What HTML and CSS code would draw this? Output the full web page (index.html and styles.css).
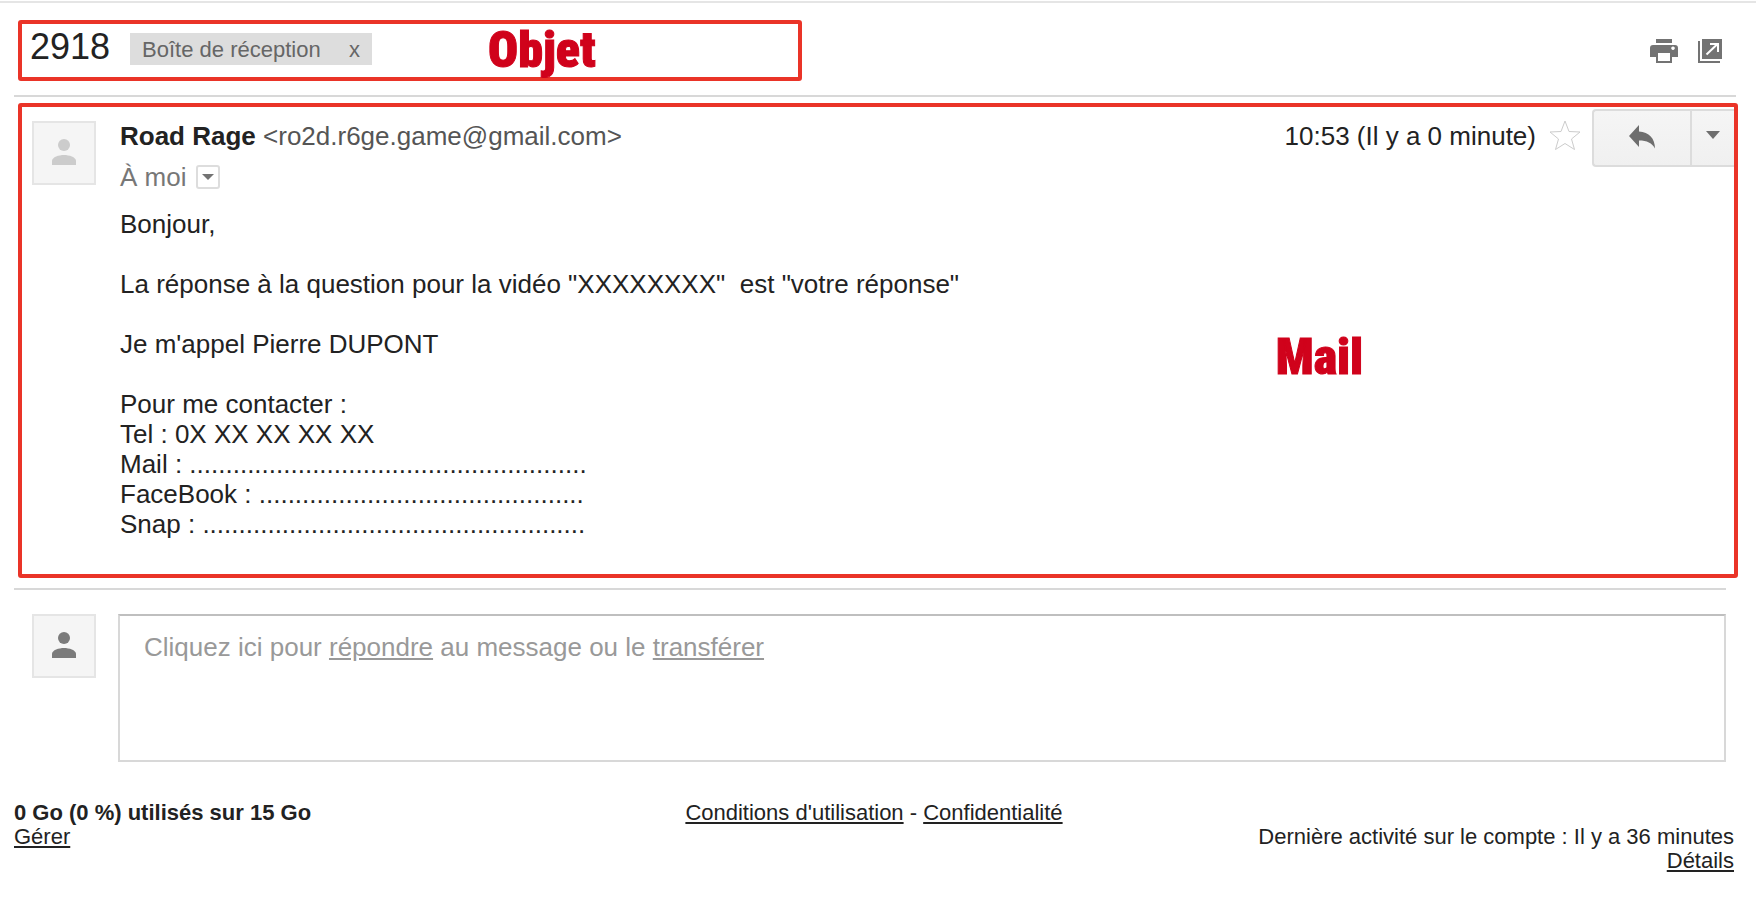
FILE: index.html
```html
<!DOCTYPE html>
<html lang="fr">

<head>
    <meta charset="UTF-8">
    <meta name="viewport" content="width=device-width, initial-scale=1.0">
    <title>2918 - Boîte de réception</title>
    <link rel="stylesheet" href="styles.css">
</head>

<body>
    <main class="page">
        <header class="header">
            <div class="frame subject">
                <h1>2918</h1>
                <div class="label">
                    <span>Boîte de réception</span>
                    <button type="button" aria-label="Retirer le libellé">x</button>
                </div>
                <strong class="note">Objet</strong>
            </div>
            <div class="tools">
                <button type="button" class="tool" aria-label="Imprimer">
                    <svg width="28" height="24" viewBox="0 0 28 24">
                        <path fill="#737373" fill-rule="evenodd" d="M6 0h16v4H6zM3 6h22a3 3 0 0 1 3 3v9h-6v6H6v-6H0V9a3 3 0 0 1 3-3zM8 14v8h12v-8zM23 7.400a1.800 1.800 0 1 0 .01 0z" />
                    </svg>
                </button>
                <button type="button" class="tool" aria-label="Nouvelle fenêtre">
                    <svg width="24" height="24" viewBox="0 0 24 24">
                        <path fill="#737373" d="M4 0h20v20H4zM0 2h2v20h20v2H0z" />
                        <path fill="none" stroke="#fff" stroke-width="2" d="M12 5h8v8M8.500 15.500L19 5.500" />
                    </svg>
                </button>
            </div>
        </header>

        <article class="frame mail">
            <div class="avatar">
                <svg width="24" height="26" viewBox="0 0 24 26">
                    <circle cx="12" cy="6" r="6" />
                    <path d="M0 26v-4c0-4 7-6 12-6s12 2 12 6v4z" />
                </svg>
            </div>
            <div class="content">
                <p class="from"><b>Road Rage</b> <span>&lt;ro2d.r6ge.game@gmail.com&gt;</span></p>
                <p class="to">À moi
                    <button type="button" class="details" aria-label="Afficher les détails">
                        <svg width="12" height="6" viewBox="0 0 12 6"><path fill="#737373" d="M0 0h12L6 6z" /></svg>
                    </button>
                </p>
                <div class="text">
                    <p>Bonjour,</p>
                    <p>La réponse à la question pour la vidéo "XXXXXXXX"&nbsp; est "votre réponse"</p>
                    <p>Je m'appel Pierre DUPONT</p>
                    <p>
                        Pour me contacter :<br>
                        Tel : 0X XX XX XX XX<br>
                        Mail : .......................................................<br>
                        FaceBook : .............................................<br>
                        Snap : .....................................................
                    </p>
                </div>
            </div>
            <div class="actions">
                <time>10:53 (Il y a 0 minute)</time>
                <button type="button" class="star" aria-label="Suivi">
                    <svg width="32" height="32" viewBox="0 0 32 32">
                        <path fill="#fff" stroke="#ccc" d="M16 2l4 10.500 11 .5-8.500 7 3 10.500L16 24.500 6.500 30.500l3-10.500L1 13l11-.5z" />
                    </svg>
                </button>
                <div class="split">
                    <button type="button" class="reply-btn" aria-label="Répondre">
                        <svg width="26" height="24" viewBox="0 0 26 24">
                            <path fill="#6e6e6e" d="M10 0v6.500c10 .5 16 7 16 17C23 18 18 15.500 10 15.500V22L0 11z" />
                        </svg>
                    </button>
                    <button type="button" class="more-btn" aria-label="Plus">
                        <svg width="14" height="8" viewBox="0 0 14 8"><path fill="#6e6e6e" d="M0 0h14L7 8z" /></svg>
                    </button>
                </div>
            </div>
            <strong class="note note-mail">Mail</strong>
        </article>

        <section class="answer">
            <div class="avatar me">
                <svg width="24" height="26" viewBox="0 0 24 26">
                    <circle cx="12" cy="6" r="6" />
                    <path d="M0 26v-4c0-4 7-6 12-6s12 2 12 6v4z" />
                </svg>
            </div>
            <div class="answer-box">
                Cliquez ici pour <a href="#">répondre</a> au message ou le <a href="#">transférer</a>
            </div>
        </section>

        <footer class="footer">
            <div>
                <b>0 Go (0 %) utilisés sur 15 Go</b><br>
                <a href="#">Gérer</a>
            </div>
            <div><a href="#">Conditions d'utilisation</a> - <a href="#">Confidentialité</a></div>
            <div class="activity">
                Dernière activité sur le compte : Il y a 36 minutes<br>
                <a href="#">Détails</a>
            </div>
        </footer>
    </main>
</body>

</html>
```
FILE: styles.css
```css
*{
    margin:0;
    padding:0;
    box-sizing:border-box;
}
body{
    padding-top:1px;
    background-color:#fff;
    color:#222;
    font-family:Arial, "Liberation Sans", sans-serif;
    font-size:26px;
    line-height:30px;
}
button{
    border:none;
    background:none;
    font:inherit;
    color:inherit;
    cursor:pointer;
}
svg{
    display:block;
}
a{
    color:inherit;
}
.page{
    border-top:2px solid #e5e5e5;
    padding:17px 18px 20px 14px;
}

/* red frames and notes */
.frame{
    border:4px solid #ea3428;
    border-radius:3px;
}
.note{
    color:#d0021b;
    font-family:Impact, "Roboto Condensed", Roboto, sans-serif;
    font-weight:900;
    font-size:50px;
    line-height:52px;
    -webkit-text-stroke:1px #d0021b;
}

/* subject */
.header{
    display:flex;
    justify-content:space-between;
    margin-right:2px;
    padding:0 14px 14px 4px;
    border-bottom:2px solid #d8d8d8;
}
.subject{
    display:flex;
    align-items:flex-start;
    width:46%;
    height:61px;
    padding-left:8px;
}
.subject h1{
    padding-top:3px;
    font-size:36px;
    line-height:40px;
    font-weight:normal;
}
.subject .note{
    margin-left:116px;
}
.label{
    display:flex;
    justify-content:space-between;
    width:242px;
    height:32px;
    margin:9px 0 0 20px;
    padding:0 12px;
    background-color:#ddd;
    color:#666;
    font-size:22px;
    line-height:34px;
}
.tools{
    display:flex;
    align-items:center;
    gap:20px;
}

/* message */
.mail{
    position:relative;
    display:flex;
    margin:6px 0 10px 4px;
    padding:2px 0 35px 10px;
}
.avatar{
    display:flex;
    justify-content:center;
    flex:none;
    width:64px;
    height:64px;
    padding-top:16px;
    border:2px solid #e5e5e5;
    background-color:#f5f5f5;
    fill:#ccc;
}
.mail .avatar{
    margin-top:12px;
}
.me{
    fill:#7b7b7b;
}
.content{
    flex:1;
    margin-left:24px;
    padding-top:12px;
}
.from span{
    color:#555;
}
.to{
    display:flex;
    align-items:center;
    gap:10px;
    margin:11px 0 17px;
    color:#777;
}
.details{
    display:flex;
    align-items:center;
    justify-content:center;
    width:24px;
    height:24px;
    border:2px solid #ddd;
    border-radius:3px;
}
.text p{
    margin-bottom:30px;
}
.text p:last-child{
    margin-bottom:0;
}
.actions{
    display:flex;
    align-items:flex-start;
}
.actions time{
    padding-top:12px;
}
.star{
    margin:10px 11px 0 13px;
}
.split{
    display:flex;
    height:58px;
    border:2px solid #dcdcdc;
    border-right:none;
    border-radius:4px 0 0 4px;
    background-image:linear-gradient(#f5f5f5, #f0f0f0);
}
.split button{
    display:flex;
    justify-content:center;
}
.reply-btn{
    width:98px;
    padding-top:14px;
    border-right:2px solid #dcdcdc;
}
.more-btn{
    width:42px;
    padding-top:20px;
}
.note-mail{
    position:absolute;
    left:73%;
    top:48%;
    padding-left:4px;
}

/* answer */
.answer{
    display:flex;
    gap:22px;
    margin-right:12px;
    padding:24px 0 0 18px;
    border-top:2px solid #d8d8d8;
}
.answer-box{
    flex:1;
    min-height:148px;
    padding:16px 24px;
    border:2px solid #d8d8d8;
    border-top-color:#bfbfbf;
    color:#999;
}

/* footer */
.footer{
    display:grid;
    grid-template-columns:1fr auto 1fr;
    margin:39px 4px 0 0;
    font-size:22px;
    line-height:24px;
}
.activity{
    padding-top:24px;
    text-align:right;
}
```
